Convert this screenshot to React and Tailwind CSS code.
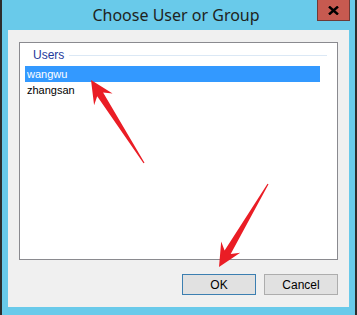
import React from "react"

// tapered "callout" arrow, tip at (tx,ty), thin tail at (sx,sy)
function arrowPoints(tx, ty, sx, sy) {
  const dx = sx - tx
  const dy = sy - ty
  const len = Math.hypot(dx, dy)
  const ux = dx / len
  const uy = dy / len
  const nx = -uy
  const ny = ux
  const head = 23
  const hw = 11
  const neck = 17
  const sw = 3.5
  const p = (a, b) => `${(tx + ux * a + nx * b).toFixed(1)},${(ty + uy * a + ny * b).toFixed(1)}`
  return [
    p(0, 0),
    p(head, hw),
    p(neck, sw),
    p(len, 0.6),
    p(len, -0.6),
    p(neck, -sw),
    p(head, -hw),
  ].join(" ")
}

const users = ["wangwu", "zhangsan"]

export default function App() {
  const selected = "wangwu"

  return (
    <div className="relative w-[357px] h-[315px] bg-[#69caea] border-x-2 border-[#2d2d2d] flex flex-col font-['Liberation_Sans',Arial,sans-serif]">
      {/* title bar */}
      <div className="h-[30px] grid grid-cols-[1fr_auto_1fr] items-start pr-[5px]">
        <div />
        <div className="pt-[5px] text-[16px] leading-[20px] text-[#1f2320] font-['Noto_Sans','Open_Sans',sans-serif]">
          Choose User or Group
        </div>
        <div className="flex justify-end">
          <button className="w-[33px] h-[21px] bg-[#c75a50] border border-t-0 border-[#6e3a36] flex items-center justify-center">
            <svg width="11" height="9" viewBox="0 0 11 9">
              <path d="M1 0.5 L10 8.5 M10 0.5 L1 8.5" stroke="#000" strokeWidth="2.4" />
            </svg>
          </button>
        </div>
      </div>

      {/* client area */}
      <div className="flex-1 mx-[6px] mb-[8px] bg-[#f0f0f0] flex flex-col pt-[12px] px-[11px]">
        <div className="h-[218px] border border-[#8a8a8f] bg-white flex flex-col">
          <div className="h-[23px] flex items-center pl-[13px] pr-[10px] pt-[1px]">
            <span className="text-[12px] text-[#1e3a9c] leading-none">Users</span>
            <div className="flex-1 h-px bg-[#dbe8f5] ml-[5px] mt-[1px]" />
          </div>
          <div className="flex flex-col pl-[5px] pr-[17px]">
            {users.map((u) => (
              <div
                key={u}
                className={`h-[16px] pl-[2px] flex items-center text-[11px] ${
                  u === selected ? "bg-[#3399ff] text-white" : "text-black"
                }`}
              >
                {u}
              </div>
            ))}
          </div>
        </div>

        <div className="flex justify-end gap-[8px] mt-[14px]">
          <button className="w-[74px] h-[21px] bg-[#e1e1e1] border border-[#3c7fb1] text-[12px] text-black">
            OK
          </button>
          <button className="w-[74px] h-[21px] bg-[#e1e1e1] border border-[#adadad] text-[12px] text-black">
            Cancel
          </button>
        </div>
      </div>

      {/* red annotation arrows */}
      <svg className="absolute left-[-2px] top-0 pointer-events-none" width="357" height="315">
        <polygon points={arrowPoints(91, 80, 144, 163)} fill="#ea1d25" />
        <polygon points={arrowPoints(219, 267, 268, 184)} fill="#ea1d25" />
      </svg>
    </div>
  )
}
